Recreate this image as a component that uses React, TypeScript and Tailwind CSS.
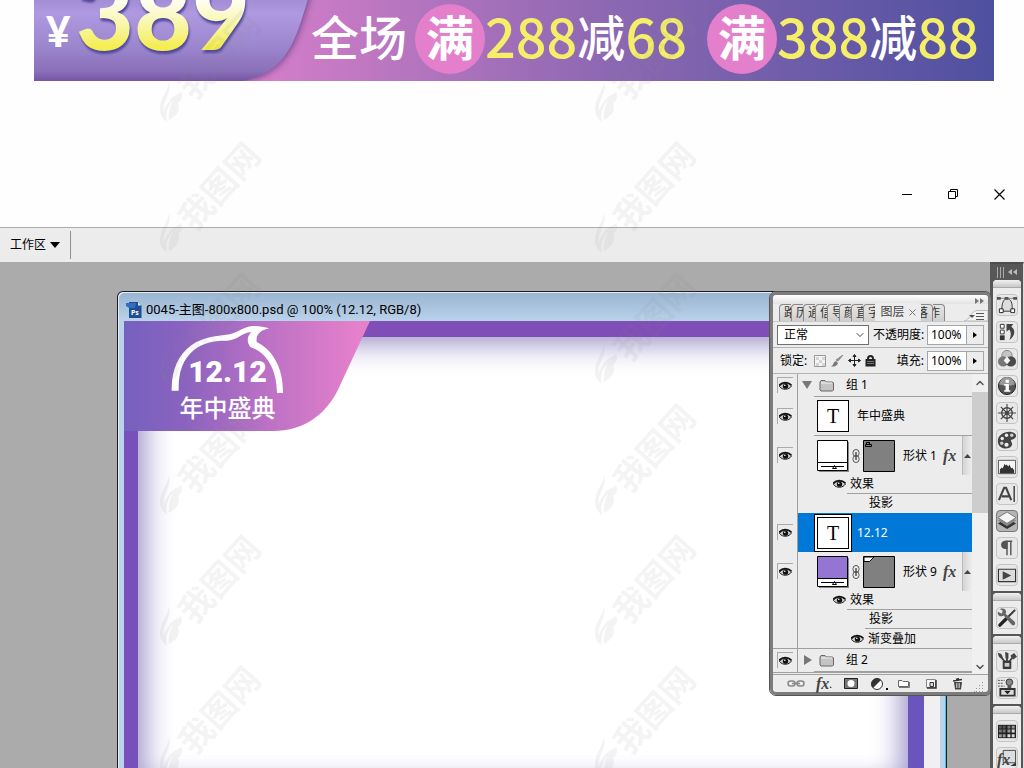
import React from "react";
import { ChevronDown, ChevronUp } from "lucide-react";

const CJK = "font-['Noto_Sans','Noto_Sans_CJK_SC',sans-serif]";

/* ---------- Watermark ---------- */

const Watermark = () => (
  <svg width="110" height="131" viewBox="0 0 110 131" className="shrink-0">
    <g fill="#8a8a8a" fillOpacity="0.1">
      <path d="M11 74C10 84 2 90 2 101C2 107 5 111 9 114C7 105 10 98 15 92C12 99 10 106 11 112C18 108 23 103 20 95C24 92 25 88 23 84C19 88 13 88 11 94C8 97 6 101 6 104C4 92 14 86 11 74Z" />
      <text
        x="61"
        y="60"
        fontSize="34"
        fontWeight="700"
        textAnchor="middle"
        transform="rotate(-48 61 47)"
        fontFamily="Noto Sans CJK SC, sans-serif"
      >
        我图网
      </text>
    </g>
  </svg>
);

const WatermarkLayer = () => (
  <div aria-hidden="true" className="absolute top-2 left-[158px] z-40 flex gap-[325px] pointer-events-none">
    {[0, 1].map((col) => (
      <div key={col} className="flex flex-col">
        {[0, 1, 2, 3, 4, 5].map((row) => (
          <Watermark key={row} />
        ))}
      </div>
    ))}
  </div>
);

/* ---------- Sale banner ---------- */

const Man = () => (
  <span className="flex size-[70px] shrink-0 items-center justify-center rounded-full bg-[#e37fcb] pb-2 text-5xl font-bold text-white">
    满
  </span>
);

const Deal = ({ over, off }: { over: string; off: string }) => (
  <span className="flex items-center pb-2">
    <span className="text-[54px] text-[#f4ee68]">{over}</span>
    减
    <span className="text-[54px] text-[#f4ee68]">{off}</span>
  </span>
);

const Banner = () => (
  <header className="relative mr-[30px] ml-[34px] flex h-[81px] shrink-0 items-center overflow-hidden bg-linear-to-r from-[#dc80cb] from-20% via-[#9069b3] via-58% to-[#4e50a0] font-['Noto_Sans_CJK_SC',sans-serif] leading-none">
    <svg width="290" height="81" viewBox="0 0 290 81" className="absolute inset-0">
      <defs>
        <linearGradient id="tag" x2="0" y2="1">
          <stop offset="0.15" stopColor="#a08ad2" />
          <stop offset="0.3" stopColor="#af99e1" />
          <stop offset="0.6" stopColor="#9c87cf" />
          <stop offset="0.83" stopColor="#8a6fb9" />
          <stop offset="0.92" stopColor="#7455a5" />
        </linearGradient>
        <filter id="tagShadow" x="-10%" y="-10%" width="120%" height="130%">
          <feDropShadow dx="2" dy="1" stdDeviation="3" floodColor="#5b3a80" floodOpacity="0.7" />
        </filter>
      </defs>
      <path d="M-9 -20H280L272 5C263 36 255 55 240 67C230 75 220 79 208 81V90H-9Z" fill="url(#tag)" filter="url(#tagShadow)" />
    </svg>
    <div className="relative flex w-[277px] shrink-0 items-center">
      <span className="-mt-5 ml-3 w-[30px] font-['Lato',sans-serif] text-[42px] font-black text-white">¥</span>
      <span className="-mt-15 bg-linear-to-b from-[#fffdf0] from-40% to-[#f4ee50] to-85% bg-clip-text font-['Lato',sans-serif] text-[100px] font-black text-transparent drop-shadow-[1px_3px_1px_#4f489c]">
        389
      </span>
    </div>
    <div className="relative flex min-w-0 grow items-center pb-1 text-5xl font-medium whitespace-nowrap text-white">
      <span className="mr-2 pb-2">全场</span>
      <Man />
      <Deal over="288" off="68" />
      <span className="w-5 shrink-0" />
      <Man />
      <Deal over="388" off="88" />
    </div>
  </header>
);

/* ---------- Window chrome ---------- */

const WindowControls = () => (
  <div className="flex h-[146px] shrink-0 justify-end gap-6 pt-[102px] pr-3.5">
    <button aria-label="最小化" className="flex size-[22px] items-center justify-center">
      <svg width="10" height="10"><path d="M0 5.5H10" stroke="#000" /></svg>
    </button>
    <button aria-label="还原" className="flex size-[22px] items-center justify-center">
      <svg width="10" height="10" fill="none" stroke="#000"><path d="M.5 2.5H7.5V9.5H.5ZM2.5 2V.5H9.5V7.5H8" /></svg>
    </button>
    <button aria-label="关闭" className="flex size-[22px] items-center justify-center">
      <svg width="11" height="11" stroke="#000" strokeWidth="1.200"><path d="M.5.5L10.500 10.500M10.500.5L.5 10.500" /></svg>
    </button>
  </div>
);

const OptionsBar = () => (
  <div className="flex h-[35px] shrink-0 items-center border-t border-[#adadad] bg-[#ececec] text-xs text-black">
    <button className="flex items-center gap-1 px-2.5">
      工作区
      <svg width="10" height="6"><path d="M0 0H10L5 6Z" /></svg>
    </button>
    <span className="h-7 border-l border-[#8f8f8f]" />
  </div>
);

/* ---------- Document window ---------- */

const PsdIcon = () => (
  <svg width="16" height="16" viewBox="0 0 16 16">
    <path d="M3 0H12L15.500 3.500V16H3Z" fill="#1f4f93" />
    <path d="M12 0L15.500 3.500H12Z" fill="#dfe9f5" />
    <path d="M0 1H10L9 6H3L0 4Z" fill="#2f6fc0" />
    <text x="5" y="13" fontSize="7" fontWeight="700" fill="#fff" fontFamily="Noto Sans, sans-serif">Ps</text>
  </svg>
);

const Badge = () => (
  <div className="absolute top-0 left-0 h-[110px] w-[247px] text-white">
    <svg width="247" height="110" viewBox="42 123 741 330" className="absolute inset-0">
      <defs>
        <linearGradient id="badge">
          <stop offset="0" stopColor="#7660bf" />
          <stop offset="0.25" stopColor="#8b63bf" />
          <stop offset="0.6" stopColor="#be72c5" />
          <stop offset="0.95" stopColor="#e580cb" />
        </linearGradient>
      </defs>
      <path d="M42 123H780L686 325C646 410 575 453 490 453H42Z" fill="url(#badge)" />
      <path
        d="M185 332C184 270 205 225 244 196C285 166 330 169 362 162C390 154 396 142 428 138C447 137 463 141 478 145C450 151 437 164 440 186C484 207 520 258 519 339H501C500 278 478 221 421 201C408 184 413 167 424 156C395 158 385 179 352 182C318 181 281 186 252 210C216 239 205 280 206 332Z"
        fill="#fff"
      />
    </svg>
    <div className="relative flex flex-col items-center pt-9 pr-10 leading-none">
      <span className="font-['Roboto',sans-serif] text-3xl leading-[30px] font-black">12.12</span>
      <span className="mt-2 font-['Noto_Sans_CJK_SC',sans-serif] text-2xl leading-6 font-medium">年中盛典</span>
    </div>
  </div>
);

const DocumentWindow = () => (
  <section className="absolute top-[29px] bottom-0 left-[117px] flex w-[830px] flex-col rounded-t-md border border-b-0 border-[#1c1c1c] bg-[#bad2ea] shadow-[inset_-1px_0_#45c3e0,inset_1px_1px_#e4eef8]">
    <h1 className="m-px flex h-[27px] items-center gap-1 rounded-t-md bg-linear-to-b from-[#9ab5d2] to-[#b9d1e9] pt-1.5 pl-[7px] font-['Roboto','Noto_Sans_CJK_SC',sans-serif] text-[13px] text-black">
      <PsdIcon />
      0045-主图-800x800.psd @ 100% (12.12, RGB/8)
    </h1>
    <div className="mr-1.5 ml-1.5 flex min-h-0 grow">
      <div className="relative min-w-0 grow border-x-[16px] border-t-[16px] border-l-[14px] border-[#804eb7] border-r-[#6a55bd] border-l-[#7850bb] bg-white">
        <div className="h-full shadow-[inset_0_24px_28px_-16px_#a59dcd,inset_26px_0_28px_-18px_#a59dcd,inset_-26px_0_28px_-18px_#a59dcd]" />
        <div className="absolute -top-4 -left-3.5">
          <Badge />
        </div>
      </div>
      <div className="w-4 bg-[#f0f0f0]" />
    </div>
  </section>
);

/* ---------- Layers panel ---------- */

const Eye = () => (
  <svg width="13" height="10" viewBox="0 0 13 10">
    <path d="M.5 5.500C2.500 1.500 9.500 1 12.500 5C10 9 3.500 9.500 .5 5.500Z" fill="#ccc" stroke="#222" />
    <path d="M0 4.500C3 .5 9 .5 12.500 4" fill="none" stroke="#111" strokeWidth="1.500" />
    <circle cx="6.500" cy="5.200" r="2.600" fill="#111" />
    <circle cx="5.800" cy="4.200" r=".8" fill="#fff" />
  </svg>
);

const Fx = ({ className = "" }: { className?: string }) => (
  <i className={`font-['Liberation_Serif',serif] text-base leading-none font-bold text-[#444] ${className}`}>fx</i>
);

const Folder = () => (
  <svg width="16" height="13" viewBox="0 0 16 13">
    <path d="M1 3L2 1.500H6L7.500 3H13.500L14.500 4V11L13.500 12H2L1 11Z" fill="#c4c4c4" stroke="#666" />
    <path d="M2 4H13" stroke="#f4f4f4" />
  </svg>
);

const Link = () => (
  <svg width="8" height="16" viewBox="0 0 8 16" fill="none" stroke="#555">
    <rect x="1" y="1.500" width="6" height="7" rx="3" />
    <rect x="1" y="7.500" width="6" height="7" rx="3" />
    <path d="M4 4V12" strokeWidth="1.500" />
  </svg>
);

const TextThumb = ({ selected = false }: { selected?: boolean }) => (
  <span
    className={`flex size-8 items-center justify-center border border-black bg-white font-['Liberation_Serif',serif] text-xl text-black ${
      selected ? "outline-2 outline-white ring-3 ring-black" : ""
    }`}
  >
    T
  </span>
);

const ShapeThumbs = ({ fill, tab }: { fill: string; tab: string }) => (
  <span className="flex items-center gap-[3px]">
    <svg width="32" height="32">
      <path d="M31 2H32V32H2V31H31Z" fill="#888" />
      <path d="M.5.5H30.500V30.500H.5Z" fill="#fff" stroke="#000" />
      <path d="M1 1H30V22H1Z" fill={fill} />
      <path d="M1 22.500H30M4 26.500H27M15.500 28.500L17.500 25.500L19.500 28.500Z" stroke="#000" fill="#fff" />
    </svg>
    <Link />
    <svg width="32" height="32">
      <path d="M.5.5H31.500V31.500H.5Z" fill="#808080" stroke="#000" />
      <path d={tab} fill={fill === "#fff" ? "none" : "#fff"} stroke="#000" />
    </svg>
  </span>
);

const LayerRow = ({ height, selected = false, children }: { height: string; selected?: boolean; children: React.ReactNode }) => (
  <li className={`flex ${height}`}>
    <span className="w-[25px] shrink-0 border-r border-[#a0a0a0] pt-[3px] pl-1">
      <button
        aria-label="可见性"
        className={`flex size-4 items-center justify-center border-t border-l border-[#aaa] ${height === "h-[23px]" ? "" : "mt-2"}`}
      >
        <Eye />
      </button>
    </span>
    <div className={`flex min-w-0 grow flex-col ${selected ? "bg-[#0078d7] text-white" : ""}`}>{children}</div>
  </li>
);

const GroupRow = ({ name, open = false }: { name: string; open?: boolean }) => (
  <LayerRow height="h-[23px]">
    <div className="flex grow items-center">
      <svg width="11" height="10" className="ml-1" fill="#777">
        <path d={open ? "M0 1H10L5 9Z" : "M2 0L10 5L2 10Z"} />
      </svg>
      <span className="ml-1.5">
        <Folder />
      </span>
      <span className="ml-[11px]">{name}</span>
    </div>
    <span className="ml-4 border-b border-[#a0a0a0]" />
  </LayerRow>
);

const ShapeRow = ({ name, fill, tab, height, children }: { name: string; fill: string; tab: string; height: string; children: React.ReactNode }) => (
  <LayerRow height={height}>
    <div className="flex h-[39px] shrink-0 items-center pl-[19px]">
      <ShapeThumbs fill={fill} tab={tab} />
      <span className="ml-2 w-10 whitespace-nowrap">{name}</span>
      <Fx />
      <button aria-label="折叠效果" className="ml-auto flex h-full w-2.5 items-center justify-center border-l border-[#bbb] bg-linear-to-r from-[#d4d4d4] to-[#eee]">
        <svg width="7" height="4"><path d="M0 4L3.500 0L7 4Z" fill="#444" /></svg>
      </button>
    </div>
    {children}
  </LayerRow>
);

const Effects = () => (
  <div className="flex h-[18px] items-center gap-1 pl-[35px]">
    <Eye />
    效果
  </div>
);

const tabsBefore = ["路", "历", "通", "信", "导", "颜", "直", "字"];
const tabsAfter = ["落", "作"];

const PanelTabs = () => (
  <div className="flex h-[18px] items-end border-b border-[#c8c8c8] pl-1.5 text-xs text-[#333]">
    {tabsBefore.map((t) => (
      <button key={t} className="h-[17px] w-3 shrink-0 overflow-hidden rounded-tl border-t border-l border-[#888] bg-linear-to-b from-[#e6e6e6] to-[#cfcfcf] pl-1 text-left whitespace-nowrap">
        {t}
      </button>
    ))}
    <button className="flex h-[18px] w-[46px] shrink-0 items-center justify-center gap-1 rounded-t bg-[#ececec] text-[#444]">
      图层
      <svg width="7" height="7" stroke="#777"><path d="M.5.5L6.500 6.500M6.500.5L.5 6.500" /></svg>
    </button>
    {tabsAfter.map((t) => (
      <button key={t} className="flex h-[17px] w-3 shrink-0 justify-end overflow-hidden rounded-tr border-t border-r border-[#888] bg-linear-to-b from-[#e6e6e6] to-[#cfcfcf] pr-1 whitespace-nowrap">
        {t}
      </button>
    ))}
    <button aria-label="面板菜单" className="ml-auto">
      <svg width="24" height="11"><path d="M0 11C6 10 7 1 13 .5H24V11Z" fill="#f2f2f2" stroke="#bbb" /><path d="M5 5H11L8 8Z" fill="#555" /><path d="M12 3.500H20M12 6.500H20M12 9.500H20" stroke="#555" /></svg>
    </button>
  </div>
);

const PercentBox = ({ id }: { id: string }) => (
  <span className="flex h-5 w-[57px] border border-[#a2a7ae]">
    <input id={id} defaultValue="100%" className="w-[38px] bg-white pl-[3px] text-xs" />
    <button aria-label="滑块" className="flex grow items-center justify-center border-l border-[#a2a7ae]">
      <svg width="4" height="6"><path d="M0 0L4 3L0 6Z" /></svg>
    </button>
  </span>
);

const PanelFooter = () => (
  <div className="flex h-[18px] items-center border-t border-[#a0a0a0] pl-3.5">
    <button aria-label="链接图层" className="w-[29px]">
      <svg width="18" height="7" fill="none" stroke="#888" strokeWidth="1.500"><rect x="1" y="1" width="7" height="5" rx="2.500" /><rect x="10" y="1" width="7" height="5" rx="2.500" /><path d="M5 3.500H13" /></svg>
    </button>
    <button aria-label="图层样式" className="flex w-7 items-center leading-none">
      <Fx />
      <span className="text-[10px]">.</span>
    </button>
    <button aria-label="图层蒙版" className="w-[27px]">
      <svg width="14" height="11"><path d="M.5.5H13.500V10.500H.5Z" fill="#777" stroke="#222" /><circle cx="7" cy="5.500" r="3.500" fill="#fff" /></svg>
    </button>
    <button aria-label="调整图层" className="w-[27px]">
      <svg width="18" height="12"><circle cx="6" cy="6" r="5.500" fill="#fff" stroke="#333" /><path d="M10 2A5.500 5.500 0 1 0 2 10Z" fill="#333" /><path d="M15 10H17V12H15Z" /></svg>
    </button>
    <button aria-label="新建组" className="w-[28px]">
      <svg width="12" height="9"><path d="M.5 1.500H4L5 2.500H10.500V7.500H.5Z" fill="#fff" stroke="#666" /><path d="M1 8.500H11.500V3" stroke="#777" fill="none" /></svg>
    </button>
    <button aria-label="新建图层" className="w-[27px]">
      <svg width="11" height="11"><path d="M.5 1.500H9.500V9.500H.5Z" fill="#f6f6f6" stroke="#888" /><path d="M4 4.500H7.500V8.500H4Z" stroke="#333" fill="#ddd" /><path d="M1 10H10V2" stroke="#333" fill="none" strokeWidth="1.500" /></svg>
    </button>
    <button aria-label="删除">
      <svg width="10" height="12"><path d="M1 4H9L8 11.500H2Z" fill="#444" /><path d="M0 3L9 1.500M3 1.500L6 .5" stroke="#333" strokeWidth="1.500" /><path d="M3.500 5V10M5 5V10M6.500 5V10" stroke="#ccc" strokeWidth=".8" /></svg>
    </button>
    <svg width="10" height="10" className="mr-1 ml-auto self-end" fill="#999">
      <path d="M8 0h1v1h-1zM5 3h1v1h-1zM8 3h1v1h-1zM2 6h1v1h-1zM5 6h1v1h-1zM8 6h1v1h-1zM0 9h1v1h-1zM2 9h1v1h-1zM5 9h1v1h-1zM8 9h1v1h-1z" />
    </svg>
  </div>
);

const LayersPanel = () => (
  <aside className="absolute top-[30px] right-[33px] z-10 w-[221px] rounded-md border-[3px] border-[#7c7c7c] bg-[#ececec] text-xs text-black outline outline-[#555]">
    <div className="flex h-[9px] items-end justify-end rounded-t-sm bg-linear-to-b from-[#fff] to-[#e2e2e2] pr-1">
      <svg width="9" height="6" fill="#777"><path d="M0 0L4 3L0 6ZM5 0L9 3L5 6Z" /></svg>
    </div>
    <PanelTabs />

    <div className="flex h-[26px] items-center border-b border-[#b4b4b4] pl-1">
      <label className="relative flex h-5 w-[92px] shrink-0 items-center border border-[#707070] bg-white">
        <select aria-label="混合模式" className="w-full appearance-none pl-1.5 text-xs leading-4">
          <option>正常</option>
          <option>溶解</option>
        </select>
        <ChevronDown size={12} strokeWidth={2} className="absolute right-0.5 text-[#444]" />
      </label>
      <label htmlFor="opacity" className="ml-1 w-[54px] shrink-0 whitespace-nowrap">不透明度:</label>
      <PercentBox id="opacity" />
    </div>

    <div className="flex h-[26px] items-center border-b border-[#b4b4b4] pl-[7px]">
      <span className="w-[34px]">锁定:</span>
      <span className="flex items-center gap-1">
        <svg width="13" height="12"><path d="M.5.5H11.500V11.500H.5Z" fill="#f4f4f4" stroke="#999" /><path d="M2 2h3v3h-3zM8 2h3v3h-3zM5 5h3v3h-3zM2 8h3v3h-3zM8 8h3v3h-3z" fill="#d4d4d4" /></svg>
        <svg width="13" height="12"><path d="M12 0L7 6L5 5Z" fill="#999" stroke="#888" /><path d="M5 6L7 8C6 11 3 12 0 11.500C3 10 2 7 5 6Z" fill="#777" /></svg>
        <svg width="13" height="13" stroke="#222" fill="#222"><path d="M6.500 1V12M1 6.500H12" /><path d="M5 2.500L6.500.5L8 2.500ZM5 10.500L6.500 12.500L8 10.500ZM2.500 5L.5 6.500L2.500 8ZM10.500 5L12.500 6.500L10.500 8Z" /></svg>
        <svg width="11" height="12"><path d="M3 5V3.500A2.500 2.500 0 0 1 8 3.500V5" fill="none" stroke="#222" strokeWidth="2" /><path d="M.5 4H10.500V11.500H.5Z" fill="#222" /><path d="M2 6.500H9M2 8.500H9" stroke="#777" /></svg>
      </span>
      <label htmlFor="fill" className="mr-[3px] ml-auto">填充:</label>
      <PercentBox id="fill" />
      <span className="w-1" />
    </div>

    <div className="flex h-[300px]">
      <ul className="min-w-0 grow overflow-hidden leading-[18px]">
        <GroupRow name="组 1" open />
        <LayerRow height="h-[39px]">
          <div className="ml-4 flex grow items-center gap-2 border-b border-[#a0a0a0] pl-[3px]">
            <TextThumb />
            年中盛典
          </div>
        </LayerRow>
        <ShapeRow name="形状 1" fill="#fff" tab="M2.500 6.500V4.500H8.500V6.500ZM3.500 4V2.500H6.500V4" height="h-[77px]">
          <Effects />
          <div className="ml-[49px] h-5 border-t border-[#a0a0a0] pl-[22px]">投影</div>
        </ShapeRow>
        <LayerRow height="h-[39px]" selected>
          <div className="ml-4 flex grow items-center gap-2 pl-[3px]">
            <TextThumb selected />
            12.12
          </div>
        </LayerRow>
        <ShapeRow name="形状 9" fill="#9575d3" tab="M1 1H11L6.500 5.500H1Z" height="h-[96px]">
          <Effects />
          <div className="ml-[49px] h-[19px] border-t border-[#a0a0a0] pl-[22px]">投影</div>
          <div className="ml-[67px] flex h-5 grow items-center gap-1 border-t border-[#a0a0a0]">
            <span className="-ml-3.5"><Eye /></span>
            渐变叠加
          </div>
        </ShapeRow>
        <li className="border-t border-[#a0a0a0]">
          <ul>
            <GroupRow name="组 2" />
          </ul>
        </li>
        <li className="flex h-1 gap-4 border-t border-[#a0a0a0] pl-7">
          <span className="mt-0.5 w-8 border-t border-black" />
          <span className="mt-0.5 w-8 border-t border-black" />
        </li>
      </ul>
      <div className="flex w-4 shrink-0 flex-col items-center bg-[#f0f0f0]">
        <ChevronUp size={12} strokeWidth={3} className="my-[3px] shrink-0 text-[#555]" />
        <span className="h-[121px] w-full bg-[#cdcdcd]" />
        <ChevronDown size={12} strokeWidth={3} className="mt-auto mb-px text-[#555]" />
      </div>
    </div>
    <PanelFooter />
  </aside>
);

/* ---------- Icon dock ---------- */

const icons = {
  paths: <><path d="M5 17C5 10 6 6 9 4H12C16 6 16 10 16 17Z" fill="#ddd" stroke="#333" /><path d="M1 3.500H20" stroke="#888" /><path d="M0 2h4v3H0zM8 2h4v3H8zM17 2h4v3h-4z" fill="#555" /><path d="M2.500 14.500h4v4h-4zM14.500 14.500h4v4h-4z" fill="#fff" stroke="#222" /></>,
  history: <><path d="M3.500 2.500h4v4h-4zM3.500 8.500h4v4h-4z" fill="#fff" stroke="#333" /><path d="M3 14h5v5H3z" fill="#333" /><path d="M10 2H17L15 5C20 8 19 15 13 19C15 14 15 11 13 8L10 10Z" fill="#444" /></>,
  channels: <><circle cx="10.500" cy="7" r="5.500" fill="#c4c4c4" stroke="#888" /><circle cx="6.500" cy="13" r="5.500" fill="#777" /><circle cx="14.500" cy="13" r="5.500" fill="#4a4a4a" /><path d="M10.500 8L14 12L10.500 16L7 12Z" fill="#f4f4f4" /></>,
  info: <><circle cx="10.500" cy="10.500" r="9" fill="#555" stroke="#222" /><path d="M2.500 9A8 8 0 0 1 18.500 9C13 11 8 11 2.500 9Z" fill="#999" /><path d="M9 4h3.500v3H9zM7.500 8.500H12.500V15H14V16.500H7.500V15H9V10H7.500z" fill="#fff" /></>,
  wheel: <><circle cx="10.500" cy="10.500" r="5.500" fill="none" stroke="#444" strokeWidth="1.500" /><circle cx="10.500" cy="10.500" r="2" fill="#555" /><path d="M10.500 1V20M1 10.500H20M4 4L17 17M17 4L4 17" stroke="#444" strokeWidth="1.200" /></>,
  palette: <><path d="M1 13C0 6 7 1 15 2C22 3 21 9 16 10C12 11 18 13 15 17C12 21 2 20 1 13Z" fill="#444" /><circle cx="5.500" cy="9" r="1.800" fill="#eee" /><circle cx="10" cy="5.500" r="1.800" fill="#eee" /><circle cx="15.500" cy="5.500" r="1.800" fill="#ccc" /><circle cx="5" cy="14" r="1.800" fill="#ccc" /><circle cx="10" cy="15.500" r="2.200" fill="#eee" /></>,
  histogram: <><path d="M1.500 3.500H19.500V17.500H1.500Z" fill="#f5f5f5" stroke="#555" /><path d="M3 17V13L5 11L6 12L8 7L9 9L10 8L12 10L13 8L15 12L16 11L18 14V17Z" fill="#333" /></>,
  character: <><path d="M2 17L7.500 4H9.500L15 17M5 13H13" fill="none" stroke="#444" strokeWidth="2.200" /><path d="M18 2V19" stroke="#111" strokeWidth="1.200" /></>,
  layers: <><path d="M10.500 7L20 13L10.500 19L1 13Z" fill="#333" /><path d="M10.500 4L20 10L10.500 16L1 10Z" fill="#888" /><path d="M10.500 1L20 7L10.500 13L1 7Z" fill="#f5f5f5" stroke="#777" /></>,
  paragraph: <><path d="M16 3.500H9M10.500 4V18M14.500 4V18" fill="none" stroke="#555" strokeWidth="1.500" /><path d="M11 3H8C3 4 3 11 8 11.500H11Z" fill="#555" /></>,
  actions: <><path d="M1.500 4.500H19.500V17.500H1.500Z" fill="#dcdcdc" stroke="#333" strokeWidth="1.200" /><path d="M6 6.500V15.500L15 11Z" fill="#444" /></>,
  tools: <><path d="M3 18L10 11" stroke="#222" strokeWidth="3.500" strokeLinecap="round" /><path d="M10 11L19 2" stroke="#333" strokeWidth="2" /><path d="M1 4L5 6L6 3L3 1C8 -1 11 3 9 6L18 14C21 17 17 20 15 17L7 8C4 10 0 8 1 4Z" fill="#666" /></>,
  brushes: <><path d="M6.500 10.500H14.500V18.500H6.500Z" fill="#333" stroke="#333" /><path d="M8 12.500h5v4H8z" fill="#ccc" /><path d="M10.500 11V7M8 11L4 6M13 11L17 6" stroke="#444" strokeWidth="2" /><path d="M8.500 1L12 2L12 8H9ZM1 2C5 2 6 5 6 8C3 8 1 5 1 2ZM14 5L18 2L21 6L17 9Z" fill="#444" /></>,
  clone: <><path d="M1 2.500H8M1 5.500H7M1 8.500H8" stroke="#444" strokeDasharray="2 1" /><circle cx="13" cy="4.500" r="3.500" fill="#888" stroke="#333" /><path d="M11 8H15V11H11Z" fill="#555" /><path d="M3.500 11.500H18.500V18.500H3.500Z" fill="#ddd" stroke="#333" strokeWidth="2" /><path d="M7.500 13.500H14.500L11 17Z" fill="#222" /></>,
  swatches: <><path d="M1 4H20V18H1Z" fill="#222" /><path d="M2 5h3v3H2zM6 5h3v3H6z" fill="#555" /><path d="M11 5h3v3h-3zM2 9h3v3H2zM6 9h3v3H6z" fill="#777" /><path d="M15.500 5h3v3h-3zM11 9h3v3h-3zM2 14h3v3H2zM6 14h3v3H6z" fill="#999" /><path d="M15.500 9h3v3h-3zM11 14h3v3h-3zM15.500 14h3v3h-3z" fill="#ddd" /></>,
  styles: <><path d="M6.500 2.500H19.500V15.500H6.500Z" fill="#ddd" stroke="#444" /><path d="M14 19L20 15V19Z" fill="#333" /></>,
};

type IconName = keyof typeof icons;

const groups: IconName[][] = [
  ["paths", "history", "channels", "info", "wheel", "palette", "histogram", "character", "layers", "paragraph", "actions"],
  ["tools"],
  ["brushes", "clone"],
  ["swatches", "styles"],
];

const Dock = () => (
  <nav className="ml-auto flex w-[34px] shrink-0 flex-col overflow-hidden border-t-2 border-r border-[#4d4d4d] border-r-[#ddd] bg-[#575757] pr-0.5 pl-[3px]">
    <div className="flex h-4 shrink-0 items-center justify-between px-1">
      <svg width="7" height="11" stroke="#aaa"><path d="M.5 0V11M3.500 0V11M6.500 0V11" /></svg>
      <svg width="9" height="6" fill="#bbb"><path d="M4 0L0 3L4 6ZM9 0L5 3L9 6Z" /></svg>
    </div>
    {groups.map((group) => (
      <div key={group[0]} className="mb-0.5 flex shrink-0 flex-col items-center gap-[5px] rounded-t-sm bg-[#ececec] pb-[5px]">
        <span className="h-2 w-full rounded-t-sm border-b border-[#aaa] bg-linear-to-b from-[#f2f2f2] to-[#c8c8c8]" />
        {group.map((name) => (
          <button
            key={name}
            aria-label={name}
            className={`relative flex size-[22px] items-center justify-center rounded-sm border first-of-type:mt-px ${
              name === "layers" ? "border-[#777] bg-[#b5b5b5]" : "border-[#c4c4c4] bg-[#e8e8e8]"
            }`}
          >
            <svg width="20" height="20" viewBox="0 0 21 21">{icons[name]}</svg>
            {name === "styles" && <Fx className="absolute bottom-0 left-0" />}
          </button>
        ))}
      </div>
    ))}
  </nav>
);

export default function App() {
  return (
    <div className={`relative flex h-screen flex-col overflow-hidden bg-[#fefefe] ${CJK}`}>
      <Banner />
      <WindowControls />
      <OptionsBar />
      <main className="relative flex min-h-0 grow overflow-hidden bg-[#ababab]">
        <DocumentWindow />
        <LayersPanel />
        <Dock />
      </main>
      <WatermarkLayer />
    </div>
  );
}
